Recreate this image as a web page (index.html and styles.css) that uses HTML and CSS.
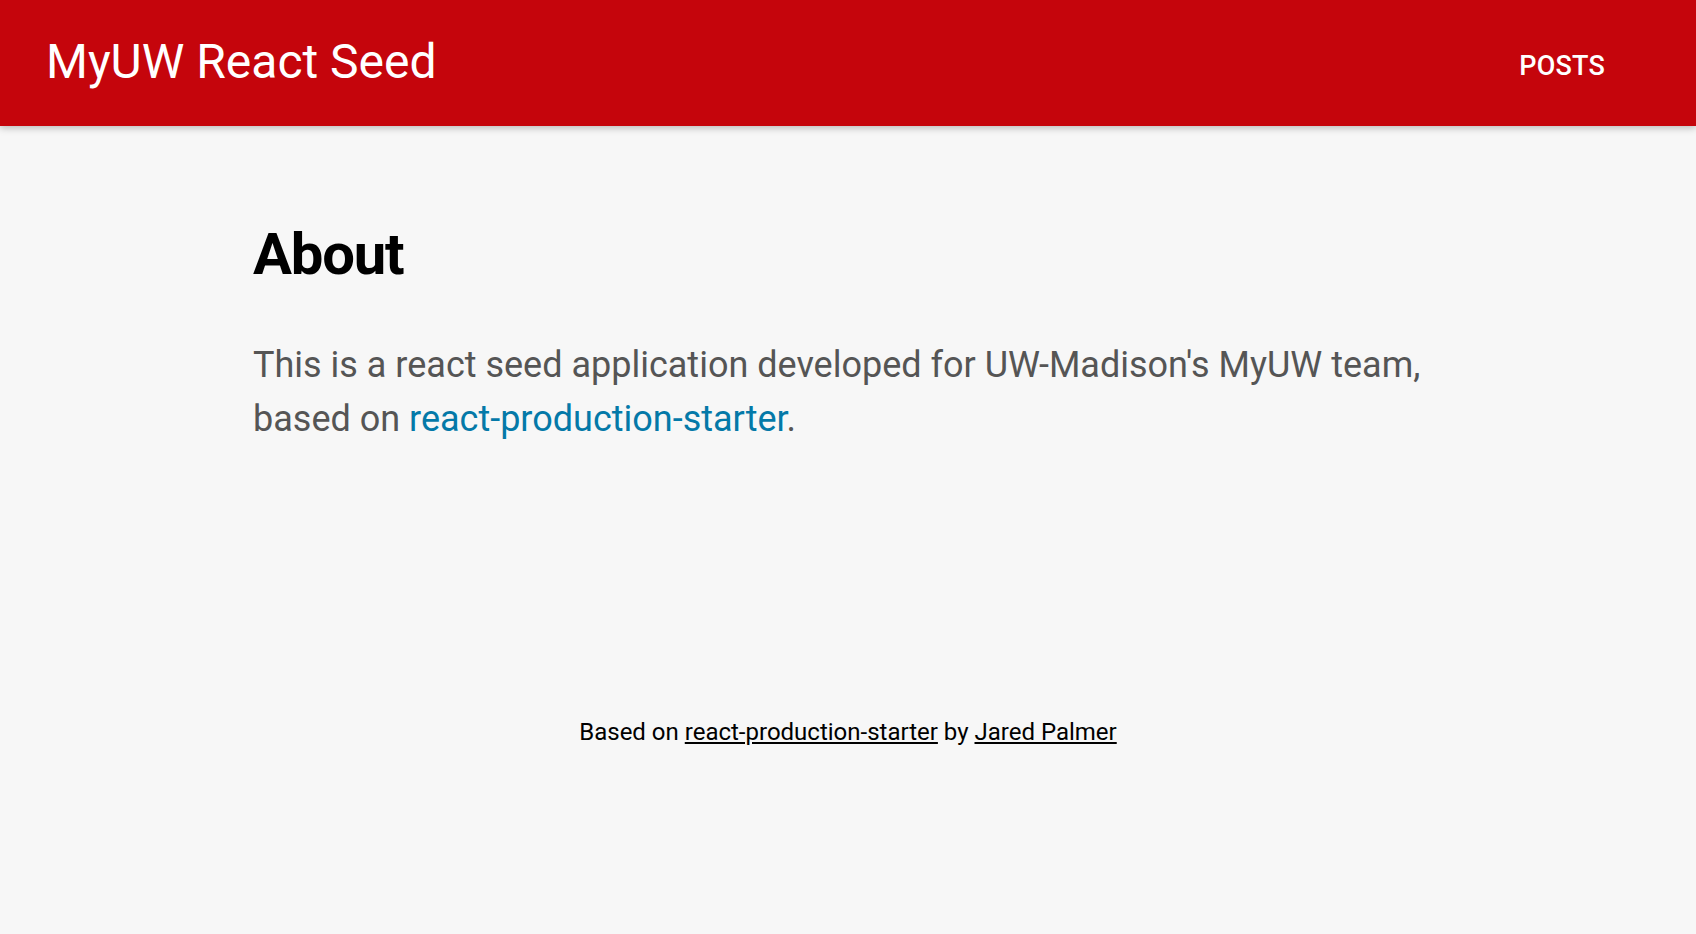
FILE: index.html
```html
<!DOCTYPE html>
<html lang="en">
<head>
<meta charset="utf-8">
<title>MyUW React Seed</title>
<link rel="stylesheet" href="styles.css">
</head>
<body>
<header class="toolbar">
  <div class="brand">MyUW React Seed</div>
  <nav class="nav"><a class="nav-link" href="#">POSTS</a></nav>
</header>
<main class="content">
  <h1 class="title">About</h1>
  <p class="lead">This is a react seed application developed for UW-Madison's MyUW team, based on <a class="lead-link" href="#">react-production-starter</a>.</p>
</main>
<footer class="footer">
  Based on <a class="footer-link" href="#">react-production-starter</a> by <a class="footer-link" href="#">Jared Palmer</a>
</footer>
</body>
</html>
```

FILE: styles.css
```css
html, body {
  margin: 0;
  padding: 0;
}
body {
  background: #f7f7f7;
  font-family: Roboto, "Liberation Sans", sans-serif;
  min-height: 934px;
}
.toolbar {
  height: 126px;
  background: #c5050c;
  color: #fff;
  display: flex;
  align-items: center;
  justify-content: space-between;
  padding: 0 91px 0 46px;
  box-sizing: border-box;
  box-shadow: 0 2px 7px rgba(0,0,0,0.25);
  position: relative;
}
.brand {
  font-size: 48px;
  font-weight: 400;
  line-height: 1;
  margin-top: -2px;
}
.nav-link {
  display: block;
  color: #fff;
  text-decoration: none;
  font-size: 27px;
  font-weight: 500;
  line-height: 1;
  letter-spacing: 0.2px;
  margin-top: 6px;
}
.content {
  width: 1190px;
  margin: 0 auto;
  padding-top: 94px;
}
.title {
  margin: 0;
  font-size: 58px;
  line-height: 1.2;
  font-weight: 700;
  letter-spacing: -1.2px;
  color: #000;
}
.lead {
  margin: 48px 0 0;
  font-size: 36px;
  line-height: 54px;
  color: #555;
}
.lead-link {
  color: #0479a8;
  text-decoration: none;
}
.footer {
  margin-top: 270px;
  text-align: center;
  font-size: 24px;
  line-height: 32px;
  color: #000;
}
.footer-link {
  color: #000;
  text-decoration: underline;
}
```
